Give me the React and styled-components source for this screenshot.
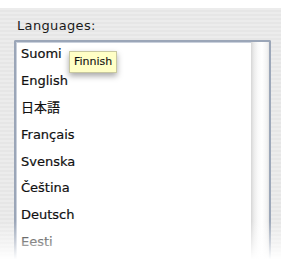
import React from 'react';
import styled, { createGlobalStyle } from 'styled-components';

const languages = [
  { name: 'Suomi', english: 'Finnish' },
  { name: 'English' },
  { name: '日本語' },
  { name: 'Français' },
  { name: 'Svenska' },
  { name: 'Čeština' },
  { name: 'Deutsch' },
  { name: 'Eesti' },
];

const GlobalStyle = createGlobalStyle`
  html, body {
    margin: 0;
    padding: 0;
    background: #ffffff;
    overflow: hidden;
  }
`;

const Page = styled.div`
  position: relative;
  width: 288px;
  height: 269px;
  padding-top: 8px;
  box-sizing: border-box;
  overflow: hidden;
  font-family: "DejaVu Sans", "Noto Sans CJK JP", sans-serif;
`;

const Panel = styled.div`
  width: 281px;
  height: 261px;
  box-sizing: border-box;
  padding: 10px 10px 0 14px;
  background: repeating-linear-gradient(
    to bottom,
    #ececec 0px,
    #ececec 2px,
    #e6e6e6 2px,
    #e6e6e6 4px
  );
  display: flex;
  flex-direction: column;
`;

const Label = styled.div`
  font-size: 13px;
  color: #1a1a1a;
  padding-left: 3px;
  letter-spacing: 0.35px;
  height: 22px;
  line-height: 16px;
`;

const ListBox = styled.div`
  position: relative;
  flex: 1;
  display: flex;
  border: 2px solid #9ba6b8;
  border-bottom: none;
  border-radius: 2px 2px 0 0;
  background: #ffffff;
  box-shadow: inset 1px 1px 0 #c9d0dc;
`;

const Items = styled.ul`
  flex: 1;
  list-style: none;
  margin: 0;
  padding: 1px 0 0 5px;
`;

const Item = styled.li`
  position: relative;
  height: 26.9px;
  line-height: 22px;
  font-size: 13px;
  color: #111111;
  -webkit-text-stroke: 0.2px #111;
`;

const Track = styled.div`
  width: 18px;
  background: linear-gradient(
    to right,
    #d6d6d6 0px,
    #ececec 3px,
    #fafafa 7px,
    #ffffff 11px,
    #f3f3f3 16px,
    #e4e4e4 18px
  );
`;

const Tooltip = styled.div`
  position: absolute;
  left: 48px;
  top: 8px;
  padding: 3px 4px 3px 4px;
  background: #ffffc6;
  border: 1px solid #c8c8a0;
  font-size: 11px;
  color: #111;
  line-height: 14px;
  white-space: nowrap;
  box-shadow: 0 3px 6px rgba(0, 0, 0, 0.35);
  -webkit-text-stroke: 0.1px #111;
`;

const Fade = styled.div`
  position: absolute;
  left: 0;
  right: 0;
  bottom: 0;
  height: 48px;
  pointer-events: none;
  background: linear-gradient(
    to bottom,
    rgba(255, 255, 255, 0) 0%,
    rgba(255, 255, 255, 0.5) 45%,
    rgba(255, 255, 255, 1) 80%
  );
`;

export default function App() {
  return (
    <>
      <GlobalStyle />
      <Page>
        <Panel>
          <Label>Languages:</Label>
          <ListBox>
            <Items>
              {languages.map((lang) => (
                <Item key={lang.name}>
                  {lang.name}
                  {lang.english && <Tooltip>{lang.english}</Tooltip>}
                </Item>
              ))}
            </Items>
            <Track />
          </ListBox>
        </Panel>
        <Fade />
      </Page>
    </>
  );
}
